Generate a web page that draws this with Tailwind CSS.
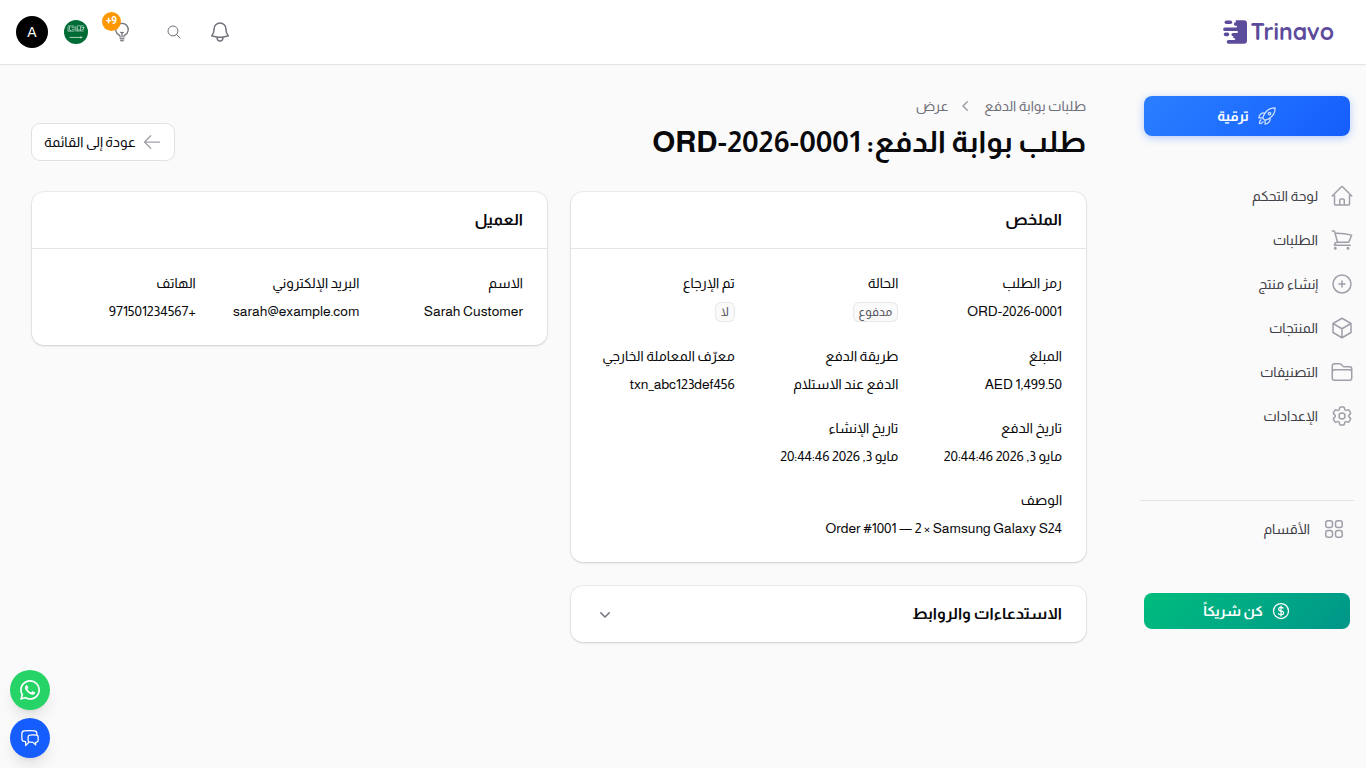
<!DOCTYPE html>
<html lang="ar" dir="rtl">
<head>
    <meta charset="UTF-8">
    <meta name="viewport" content="width=device-width, initial-scale=1.0">
    <title>طلب بوابة الدفع: ORD-2026-0001</title>
    <script src="https://cdn.jsdelivr.net/npm/@tailwindcss/browser@4"></script>
</head>
<body class="flex min-h-screen flex-col bg-zinc-50 text-sm text-zinc-950 font-['Almarai','Liberation_Sans',sans-serif]">

    <!-- Top bar -->
    <header class="flex h-16 items-center justify-between bg-white ps-8 pe-4 shadow-xs ring-1 ring-zinc-950/5">
        <a href="#" dir="ltr" class="flex items-center gap-1 text-[#5d4b9c]">
            <svg class="size-6" viewBox="0 0 24 24" fill="currentColor" aria-hidden="true">
                <rect x="1.6" y="0.4" width="7.6" height="3.6" rx="1.8"/>
                <rect x="0.8" y="12.6" width="5.4" height="3.6" rx="1.8"/>
                <path d="M12.8 0.2H21c1.9 0 3 1.1 3 3v17.500c0 1.900-1.100 3-3 3H5.600a1.900 1.900 0 0 1 0-3.800h5.900a.8.8 0 0 0 0-1.600h-.4a1 1 0 0 1 0-2h-1a1.700 1.700 0 0 1 0-3.400h3.900a.9.9 0 0 0 0-1.800H2a1.850 1.850 0 0 1 0-3.700h11.300a.8.8 0 0 0 0-1.600h-.7a1.800 1.800 0 0 1 .2-3.600Z"/>
            </svg>
            <span class="text-[23px] font-bold font-['Quicksand','Nunito','Varela_Round','Almarai',sans-serif]">Trinavo</span>
        </a>

        <div class="flex items-center gap-4">
            <div class="flex items-center gap-2.5">
                <button type="button" aria-label="الإشعارات" class="flex size-9 items-center justify-center text-zinc-500">
                    <svg class="size-6" viewBox="0 0 24 24" fill="none" stroke="currentColor" stroke-width="1.5" stroke-linecap="round" stroke-linejoin="round"><path d="M14.857 17.082a23.848 23.848 0 0 0 5.454-1.31A8.967 8.967 0 0 1 18 9.75V9A6 6 0 0 0 6 9v.75a8.967 8.967 0 0 1-2.312 6.022c1.733.64 3.56 1.085 5.455 1.31m5.714 0a24.255 24.255 0 0 1-5.714 0m5.714 0a3 3 0 1 1-5.714 0"/></svg>
                </button>
                <button type="button" aria-label="بحث" class="flex size-9 items-center justify-center text-zinc-500">
                    <svg class="size-4" viewBox="0 0 24 24" fill="none" stroke="currentColor" stroke-width="1.5" stroke-linecap="round" stroke-linejoin="round"><path d="m21 21-5.197-5.197m0 0A7.500 7.500 0 1 0 5.196 5.196a7.500 7.500 0 0 0 10.607 10.607Z"/></svg>
                </button>
            </div>
            <button type="button" aria-label="الاقتراحات" class="relative flex size-9 items-center justify-center text-zinc-500">
                <svg class="size-5" viewBox="0 0 24 24" fill="none" stroke="currentColor" stroke-width="1.5" stroke-linecap="round" stroke-linejoin="round"><path d="M12 18v-5.250m0 0a6.010 6.010 0 0 0 1.500-.189m-1.500.189a6.010 6.010 0 0 1-1.500-.189m3.750 7.478a12.060 12.060 0 0 1-4.500 0m3.750 2.383a14.406 14.406 0 0 1-3 0M14.250 18v-.192c0-.983.658-1.823 1.508-2.316a7.500 7.500 0 1 0-7.517 0c.85.493 1.509 1.333 1.509 2.316V18"/></svg>
                <span class="absolute -top-0.5 -left-0.5 flex size-[19px] items-center justify-center rounded-full bg-[#ff9800] text-[10px] font-bold text-white font-['Roboto',sans-serif]">9+</span>
            </button>
            <button type="button" aria-label="اللغة" class="size-6">
                <svg class="size-6" viewBox="0 0 24 24">
                    <circle cx="12" cy="12" r="12" fill="#006c35"/>
                    <g fill="none" stroke="#fff" stroke-width=".7" stroke-opacity=".85" stroke-linecap="round">
                        <path d="M4 7v3.500M5.500 6.600v3.200q0 1 1.300.8M8 7.200h2.400M8.200 9.400q1.400 1.400 2.600-.4M11.800 6.600v4M13.300 6.800v3.400q1.400.8 2-.8M16.600 6.600v4M17.800 7.200l2 .2M18.200 9.800q1.600.4 1.800-2.600"/>
                        <path stroke-width=".6" d="M4 11.200h6M12 11h7.500M4.500 5.900h5M13.500 5.800h5.800"/>
                        <path stroke-width=".8" d="M6 17.400h12M16.800 16.800v1.200"/>
                    </g>
                </svg>
            </button>
            <button type="button" aria-label="الحساب" class="flex size-8 items-center justify-center rounded-full bg-black text-sm text-white font-['Liberation_Sans',sans-serif]">A</button>
        </div>
    </header>

    <div class="flex flex-1">
        <!-- Sidebar -->
        <aside class="w-[248px] shrink-0 ps-3 pe-[22px] pt-8">
            <a href="#" class="mx-1 flex h-10 items-center justify-center gap-2 rounded-lg bg-linear-135 from-blue-500 to-blue-600 font-bold text-white shadow-[0_2px_8px] shadow-blue-600/30">
                <svg class="size-5 opacity-80" viewBox="0 0 24 24" fill="none" stroke="currentColor" stroke-width="1.5" stroke-linecap="round" stroke-linejoin="round"><path d="M15.590 14.370a6 6 0 0 1-5.840 7.380v-4.800m5.840-2.580a14.980 14.980 0 0 0 6.160-12.120A14.980 14.980 0 0 0 9.631 8.410m5.960 5.960a14.926 14.926 0 0 1-5.841 2.580m-.119-8.540a6 6 0 0 0-7.381 5.840h4.800m2.581-5.840a14.927 14.927 0 0 0-2.580 5.840m2.699 2.700c-.103.021-.207.041-.311.06a15.090 15.090 0 0 1-2.448-2.448 14.900 14.900 0 0 1 .06-.312m-2.240 2.390a4.493 4.493 0 0 0-1.757 4.306 4.493 4.493 0 0 0 4.306-1.758M16.500 9a1.500 1.500 0 1 1-3 0 1.500 1.500 0 0 1 3 0Z"/></svg>
                ترقية
            </a>

            <nav class="mt-10 flex flex-col gap-1 text-zinc-700">
                <a href="#" class="flex h-10 items-center gap-3">
                    <svg class="size-6 text-zinc-400" viewBox="0 0 24 24" fill="none" stroke="currentColor" stroke-width="1.5" stroke-linecap="round" stroke-linejoin="round"><path d="m2.250 12 8.954-8.955c.44-.439 1.152-.439 1.591 0L21.750 12M4.500 9.750v10.125c0 .621.504 1.125 1.125 1.125H9.750v-4.875c0-.621.504-1.125 1.125-1.125h2.250c.621 0 1.125.504 1.125 1.125V21h4.125c.621 0 1.125-.504 1.125-1.125V9.750M8.250 21h8.250"/></svg>
                    لوحة التحكم
                </a>
                <a href="#" class="flex h-10 items-center gap-3">
                    <svg class="size-6 text-zinc-400" viewBox="0 0 24 24" fill="none" stroke="currentColor" stroke-width="1.5" stroke-linecap="round" stroke-linejoin="round"><path d="M2.250 3h1.386c.51 0 .955.343 1.087.835l.383 1.437M7.500 14.250a3 3 0 0 0-3 3h15.750m-12.750-3h11.218c1.121-2.300 2.100-4.684 2.924-7.138a60.114 60.114 0 0 0-16.536-1.840M7.500 14.250 5.106 5.272M6 20.250a.75.75 0 1 1-1.500 0 .75.75 0 0 1 1.500 0Zm12.750 0a.75.75 0 1 1-1.500 0 .75.75 0 0 1 1.500 0Z"/></svg>
                    الطلبات
                </a>
                <a href="#" class="flex h-10 items-center gap-3">
                    <svg class="size-6 text-zinc-400" viewBox="0 0 24 24" fill="none" stroke="currentColor" stroke-width="1.5" stroke-linecap="round" stroke-linejoin="round"><path d="M12 9v6m3-3H9m12 0a9 9 0 1 1-18 0 9 9 0 0 1 18 0Z"/></svg>
                    إنشاء منتج
                </a>
                <a href="#" class="flex h-10 items-center gap-3">
                    <svg class="size-6 text-zinc-400" viewBox="0 0 24 24" fill="none" stroke="currentColor" stroke-width="1.5" stroke-linecap="round" stroke-linejoin="round"><path d="m21 7.500-9-5.250L3 7.500m18 0-9 5.250m9-5.250v9l-9 5.250M3 7.500l9 5.250M3 7.500v9l9 5.250m0-9v9"/></svg>
                    المنتجات
                </a>
                <a href="#" class="flex h-10 items-center gap-3">
                    <svg class="size-6 text-zinc-400" viewBox="0 0 24 24" fill="none" stroke="currentColor" stroke-width="1.5" stroke-linecap="round" stroke-linejoin="round"><path d="M2.250 12.750V12A2.250 2.250 0 0 1 4.500 9.750h15A2.250 2.250 0 0 1 21.750 12v.75m-8.690-6.440-2.120-2.120a1.500 1.500 0 0 0-1.061-.44H4.500A2.250 2.250 0 0 0 2.250 6v12a2.250 2.250 0 0 0 2.250 2.250h15A2.250 2.250 0 0 0 21.750 18V9a2.250 2.250 0 0 0-2.250-2.250h-5.379a1.500 1.500 0 0 1-1.060-.44Z"/></svg>
                    التصنيفات
                </a>
                <a href="#" class="flex h-10 items-center gap-3">
                    <svg class="size-6 text-zinc-400" viewBox="0 0 24 24" fill="none" stroke="currentColor" stroke-width="1.5" stroke-linecap="round" stroke-linejoin="round"><path d="M9.594 3.940c.09-.542.56-.94 1.110-.94h2.593c.55 0 1.020.398 1.110.94l.213 1.281c.063.374.313.686.645.87.074.04.147.083.22.127.325.196.72.257 1.075.124l1.217-.456a1.125 1.125 0 0 1 1.370.49l1.296 2.247a1.125 1.125 0 0 1-.26 1.431l-1.003.827c-.293.241-.438.613-.43.992a7.723 7.723 0 0 1 0 .255c-.008.378.137.75.43.991l1.004.827c.424.35.534.955.26 1.430l-1.298 2.247a1.125 1.125 0 0 1-1.369.491l-1.217-.456c-.355-.133-.75-.072-1.076.124a6.470 6.470 0 0 1-.22.128c-.331.183-.581.495-.644.869l-.213 1.281c-.09.543-.56.94-1.110.94h-2.594c-.55 0-1.019-.398-1.110-.94l-.213-1.281c-.062-.374-.312-.686-.644-.87a6.520 6.520 0 0 1-.22-.127c-.325-.196-.72-.257-1.076-.124l-1.217.456a1.125 1.125 0 0 1-1.369-.49l-1.297-2.247a1.125 1.125 0 0 1 .26-1.431l1.004-.827c.292-.24.437-.613.43-.991a6.932 6.932 0 0 1 0-.255c.007-.38-.138-.751-.43-.992l-1.004-.827a1.125 1.125 0 0 1-.26-1.430l1.297-2.247a1.125 1.125 0 0 1 1.370-.491l1.216.456c.356.133.751.072 1.076-.124.072-.044.146-.086.22-.128.332-.183.582-.495.644-.869l.214-1.280Z"/><path d="M15 12a3 3 0 1 1-6 0 3 3 0 0 1 6 0Z"/></svg>
                    الإعدادات
                </a>
            </nav>

            <div class="mt-16 border-t border-zinc-200 px-2 pt-2 text-zinc-700">
                <button type="button" class="flex h-10 w-full items-center gap-3">
                    <svg class="size-6 text-zinc-400" viewBox="0 0 24 24" fill="none" stroke="currentColor" stroke-width="1.5"><rect x="3.750" y="3.750" width="6.750" height="6.750" rx="2.250"/><rect x="13.500" y="3.750" width="6.750" height="6.750" rx="2.250"/><rect x="3.750" y="13.500" width="6.750" height="6.750" rx="2.250"/><rect x="13.500" y="13.500" width="6.750" height="6.750" rx="2.250"/></svg>
                    الأقسام
                </button>
            </div>

            <a href="#" class="mx-1 mt-11 flex h-9 items-center justify-center gap-2 rounded-lg bg-linear-135 from-emerald-500 to-teal-600 font-bold text-white">
                <svg class="size-5" viewBox="0 0 24 24" fill="none" stroke="currentColor" stroke-width="1.5" stroke-linecap="round" stroke-linejoin="round"><path d="M12 6v12m-3-2.818.879.659c1.171.879 3.070.879 4.242 0 1.172-.879 1.172-2.303 0-3.182C13.536 12.219 12.768 12 12 12c-.725 0-1.450-.22-2.003-.659-1.106-.879-1.106-2.303 0-3.182s2.900-.879 4.006 0l.415.33M21 12a9 9 0 1 1-18 0 9 9 0 0 1 18 0Z"/></svg>
                كن شريكاً
            </a>
        </aside>

        <!-- Page content -->
        <main class="min-w-0 flex-1 px-8 pt-8 pb-8">
            <div class="flex items-end justify-between">
                <div>
                    <nav class="flex items-center gap-2 text-zinc-500">
                        <a href="#">طلبات بوابة الدفع</a>
                        <svg class="size-5 text-zinc-400" viewBox="0 0 20 20" fill="currentColor" aria-hidden="true"><path d="M11.780 5.220a.75.75 0 0 1 0 1.060L8.060 10l3.720 3.720a.75.75 0 1 1-1.060 1.060l-4.250-4.250a.75.75 0 0 1 0-1.060l4.250-4.250a.75.75 0 0 1 1.060 0Z"/></svg>
                        <span>عرض</span>
                    </nav>
                    <h1 class="mt-2 text-3xl font-bold">طلب بوابة الدفع: ORD-2026-0001</h1>
                </div>
                <a href="#" class="flex h-9 items-center gap-1.5 rounded-lg bg-white px-3 ring-1 ring-zinc-950/10">
                    <svg class="size-5 text-zinc-400" viewBox="0 0 24 24" fill="none" stroke="currentColor" stroke-width="1.5" stroke-linecap="round" stroke-linejoin="round"><path d="M10.500 19.500 3 12m0 0 7.500-7.500M3 12h18"/></svg>
                    عودة إلى القائمة
                </a>
            </div>

            <div class="mt-8 grid grid-cols-2 items-start gap-6">
                <div class="flex flex-col gap-6">
                    <section class="rounded-xl bg-white shadow-sm ring-1 ring-zinc-950/5">
                        <h2 class="px-6 py-4 text-base font-bold">الملخص</h2>
                        <dl class="grid grid-cols-3 gap-6 border-t border-zinc-200 p-6">
                            <div>
                                <dt>رمز الطلب</dt>
                                <dd class="mt-2">ORD-2026-0001</dd>
                            </div>
                            <div>
                                <dt>الحالة</dt>
                                <dd class="mt-2"><span class="inline-flex h-5 items-center rounded-md bg-zinc-50 px-1.5 text-xs text-zinc-600 ring-1 ring-zinc-600/10 ring-inset">مدفوع</span></dd>
                            </div>
                            <div>
                                <dt>تم الإرجاع</dt>
                                <dd class="mt-2"><span class="inline-flex h-5 items-center rounded-md bg-zinc-50 px-1.5 text-xs text-zinc-600 ring-1 ring-zinc-600/10 ring-inset">لا</span></dd>
                            </div>
                            <div>
                                <dt>المبلغ</dt>
                                <dd class="mt-2">AED 1,499.50</dd>
                            </div>
                            <div>
                                <dt>طريقة الدفع</dt>
                                <dd class="mt-2">الدفع عند الاستلام</dd>
                            </div>
                            <div>
                                <dt>معرّف المعاملة الخارجي</dt>
                                <dd class="mt-2">txn_abc123def456</dd>
                            </div>
                            <div>
                                <dt>تاريخ الدفع</dt>
                                <dd class="mt-2">مايو 3, 2026 20:44:46</dd>
                            </div>
                            <div>
                                <dt>تاريخ الإنشاء</dt>
                                <dd class="mt-2">مايو 3, 2026 20:44:46</dd>
                            </div>
                            <div class="col-span-3">
                                <dt>الوصف</dt>
                                <dd class="mt-2">Order #1001 — 2 × Samsung Galaxy S24</dd>
                            </div>
                        </dl>
                    </section>

                    <section class="rounded-xl bg-white shadow-sm ring-1 ring-zinc-950/5">
                        <h2>
                            <button type="button" aria-expanded="false" class="flex w-full items-center justify-between px-6 py-4 text-base font-bold">
                                الاستدعاءات والروابط
                                <svg class="size-5 text-zinc-500" viewBox="0 0 20 20" fill="currentColor" aria-hidden="true"><path d="M5.220 8.220a.75.75 0 0 1 1.060 0L10 11.940l3.720-3.720a.75.75 0 1 1 1.060 1.060l-4.250 4.250a.75.75 0 0 1-1.060 0L5.220 9.280a.75.75 0 0 1 0-1.060Z"/></svg>
                            </button>
                        </h2>
                    </section>
                </div>

                <section class="rounded-xl bg-white shadow-sm ring-1 ring-zinc-950/5">
                    <h2 class="px-6 py-4 text-base font-bold">العميل</h2>
                    <dl class="grid grid-cols-3 gap-6 border-t border-zinc-200 p-6">
                        <div>
                            <dt>الاسم</dt>
                            <dd class="mt-2">Sarah Customer</dd>
                        </div>
                        <div>
                            <dt>البريد الإلكتروني</dt>
                            <dd class="mt-2">sarah@example.com</dd>
                        </div>
                        <div>
                            <dt>الهاتف</dt>
                            <dd class="mt-2">+971501234567</dd>
                        </div>
                    </dl>
                </section>
            </div>
        </main>
    </div>

    <!-- Floating contact buttons -->
    <div class="fixed bottom-2.5 left-2.5 flex flex-col gap-2">
        <a href="#" aria-label="واتساب" class="flex size-10 items-center justify-center rounded-full bg-[#25d366] text-white shadow-lg">
            <svg class="size-5" viewBox="0 32 448 448" fill="currentColor"><path d="M380.900 97.100C339 55.100 283.200 32 223.900 32c-122.400 0-222 99.600-222 222 0 39.100 10.200 77.300 29.600 111L0 480l117.700-30.900c32.400 17.700 68.900 27 106.100 27h.1c122.300 0 224.100-99.600 224.100-222 0-59.300-25.200-115-67.100-157zm-157 341.600c-33.200 0-65.700-8.900-94-25.700l-6.700-4-69.800 18.300L72 359.200l-4.400-7c-18.500-29.400-28.200-63.300-28.200-98.200 0-101.700 82.800-184.500 184.600-184.500 49.300 0 95.600 19.200 130.400 54.100 34.800 34.900 56.200 81.200 56.100 130.500 0 101.800-84.900 184.600-186.600 184.600zm101.200-138.200c-5.500-2.800-32.800-16.200-37.900-18-5.100-1.900-8.800-2.800-12.500 2.800-3.700 5.600-14.300 18-17.600 21.800-3.200 3.700-6.500 4.200-12 1.400-32.600-16.300-54-29.100-75.500-66-5.700-9.800 5.700-9.100 16.300-30.300 1.800-3.700.9-6.900-.5-9.700-1.400-2.800-12.500-30.100-17.100-41.200-4.500-10.800-9.100-9.300-12.500-9.500-3.200-.2-6.900-.2-10.600-.2-3.700 0-9.700 1.400-14.800 6.900-5.100 5.600-19.400 19-19.400 46.300 0 27.300 19.900 53.700 22.600 57.400 2.800 3.700 39.100 59.700 94.800 83.800 35.200 15.200 49 16.500 66.600 13.900 10.700-1.600 32.800-13.400 37.400-26.400 4.600-13 4.600-24.100 3.200-26.400-1.300-2.500-5-3.900-10.500-6.600z"/></svg>
        </a>
        <button type="button" aria-label="المحادثة" class="flex size-10 items-center justify-center rounded-full bg-blue-600 text-white shadow-lg">
            <svg class="size-5" viewBox="0 0 24 24" fill="none" stroke="currentColor" stroke-width="1.5" stroke-linecap="round" stroke-linejoin="round"><path d="M20.250 8.511c.884.284 1.500 1.128 1.500 2.097v4.286c0 1.136-.847 2.100-1.980 2.193-.34.027-.68.052-1.020.072v3.091l-3-3c-1.354 0-2.694-.055-4.020-.163a2.115 2.115 0 0 1-.825-.242m9.345-8.334a2.126 2.126 0 0 0-.476-.095 48.640 48.640 0 0 0-8.048 0c-1.131.094-1.976 1.057-1.976 2.192v4.286c0 .837.46 1.580 1.155 1.951m9.345-8.334V6.637c0-1.621-1.152-3.026-2.760-3.235A48.455 48.455 0 0 0 11.250 3c-2.115 0-4.198.137-6.240.402-1.608.209-2.760 1.614-2.760 3.235v6.226c0 1.621 1.152 3.026 2.760 3.235.577.075 1.157.14 1.740.194V21l4.155-4.155"/></svg>
        </button>
    </div>

</body>
</html>
